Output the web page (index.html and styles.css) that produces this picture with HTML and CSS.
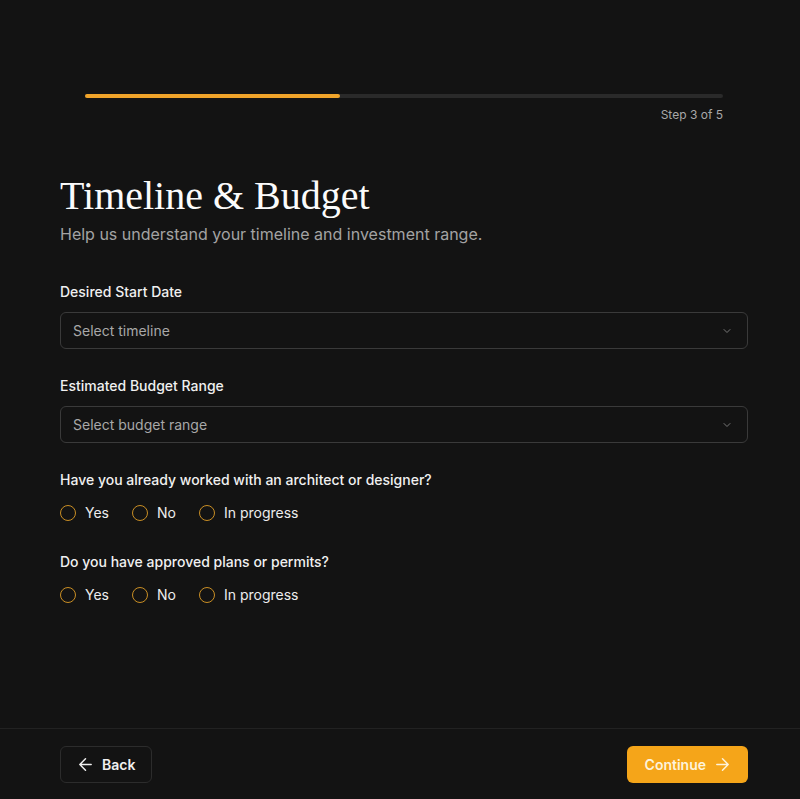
FILE: index.html
```html
<!DOCTYPE html>
<html>
<head>
<meta charset="utf-8">
<link rel="stylesheet" href="styles.css">
</head>
<body>
<div class="page">
  <main class="main">
    <div class="progress">
      <div class="track"><div class="fill" style="width:40%"></div></div>
      <div class="step">Step 3 of 5</div>
    </div>
    <section class="form">
      <h1 class="title">Timeline &amp; Budget</h1>
      <p class="subtitle">Help us understand your timeline and investment range.</p>

      <div class="field">
        <label class="label">Desired Start Date</label>
        <div class="select">
          <span>Select timeline</span>
          <svg class="chev" width="12" height="12" viewBox="0 0 24 24" fill="none" stroke="currentColor" stroke-width="2" stroke-linecap="round" stroke-linejoin="round"><path d="M6 9l6 6 6-6"/></svg>
        </div>
      </div>

      <div class="field">
        <label class="label">Estimated Budget Range</label>
        <div class="select">
          <span>Select budget range</span>
          <svg class="chev" width="12" height="12" viewBox="0 0 24 24" fill="none" stroke="currentColor" stroke-width="2" stroke-linecap="round" stroke-linejoin="round"><path d="M6 9l6 6 6-6"/></svg>
        </div>
      </div>

      <div class="field q">
        <div class="label">Have you already worked with an architect or designer?</div>
        <div class="radios">
          <label class="radio"><span class="dot"></span>Yes</label>
          <label class="radio"><span class="dot"></span>No</label>
          <label class="radio"><span class="dot"></span>In progress</label>
        </div>
      </div>

      <div class="field q">
        <div class="label">Do you have approved plans or permits?</div>
        <div class="radios">
          <label class="radio"><span class="dot"></span>Yes</label>
          <label class="radio"><span class="dot"></span>No</label>
          <label class="radio"><span class="dot"></span>In progress</label>
        </div>
      </div>
    </section>
  </main>
  <footer class="footer">
    <button class="btn back">
      <svg class="ico" width="13" height="13" viewBox="4 4 16 16" fill="none" stroke="currentColor" stroke-width="1.8" stroke-linecap="round" stroke-linejoin="round"><path d="M19 12H5M12 19l-7-7 7-7"/></svg>
      Back
    </button>
    <button class="btn next">
      Continue
      <svg class="ico" width="13" height="13" viewBox="4 4 16 16" fill="none" stroke="currentColor" stroke-width="1.8" stroke-linecap="round" stroke-linejoin="round"><path d="M5 12h14M12 5l7 7-7 7"/></svg>
    </button>
  </footer>
</div>
</body>
</html>
```

FILE: styles.css
```css
* { box-sizing: border-box; }
html, body { margin: 0; padding: 0; }
body {
  background: #131313;
  color: #f2f2f2;
  font-family: "Inter", "DejaVu Sans", sans-serif;
}
.page {
  height: 799px;
  display: flex;
  flex-direction: column;
}
.main {
  flex: 1;
  padding: 94px 52px 0 60px;
}
.progress {
  padding: 0 25px;
}
.track {
  height: 4px;
  background: #2a2a2a;
  border-radius: 2px;
}
.fill {
  height: 100%;
  background: #f0a42a;
  border-radius: 2px;
}
.step {
  text-align: right;
  font-size: 12px;
  color: #a8a8a8;
  margin-top: 9px;
}
.form {
  margin-top: 50px;
}
.title {
  font-family: "Liberation Serif", "DejaVu Serif", serif;
  font-weight: 400;
  font-size: 40px;
  line-height: 48px;
  margin: 0;
  color: #fbfbfb;
}
.subtitle {
  margin: 4px 0 0;
  font-size: 16px;
  color: #a3a3a3;
}
.field {
  margin-top: 38px;
}
.field + .field { margin-top: 27px; }
.label {
  display: block;
  font-size: 14px;
  font-weight: 500;
  color: #f0f0f0;
  line-height: 20px;
}
.select {
  margin-top: 10px;
  height: 37px;
  border: 1px solid #3a3a3a;
  border-radius: 6px;
  display: flex;
  align-items: center;
  justify-content: space-between;
  padding: 0 14px 0 12px;
  font-size: 14px;
  color: #a8a8a8;
}
.chev { color: #777; }
.field.q { margin-top: 27px; }
.field.q + .field.q { margin-top: 31px; }
.radios {
  display: flex;
  gap: 23px;
  margin-top: 14px;
}
.radio {
  display: flex;
  align-items: center;
  gap: 9px;
  font-size: 14px;
  color: #ededed;
}
.dot {
  width: 16px;
  height: 16px;
  border: 1.5px solid #c98e24;
  border-radius: 50%;
}
.footer {
  border-top: 1px solid #222;
  height: 71px;
  display: flex;
  align-items: center;
  justify-content: space-between;
  padding: 0 52px 0 60px;
}
.btn {
  height: 37px;
  border-radius: 6px;
  font-family: inherit;
  font-size: 14px;
  font-weight: 600;
  display: flex;
  align-items: center;
  gap: 10px;
  cursor: pointer;
}
.ico { flex-shrink: 0; }
.back {
  background: transparent;
  border: 1px solid #2c2c2c;
  color: #f0f0f0;
  padding: 0 16px 0 18px;
}
.next {
  background: #f5a519;
  border: none;
  color: #fdf3dc;
  padding: 0 19px 0 18px;
}
```
